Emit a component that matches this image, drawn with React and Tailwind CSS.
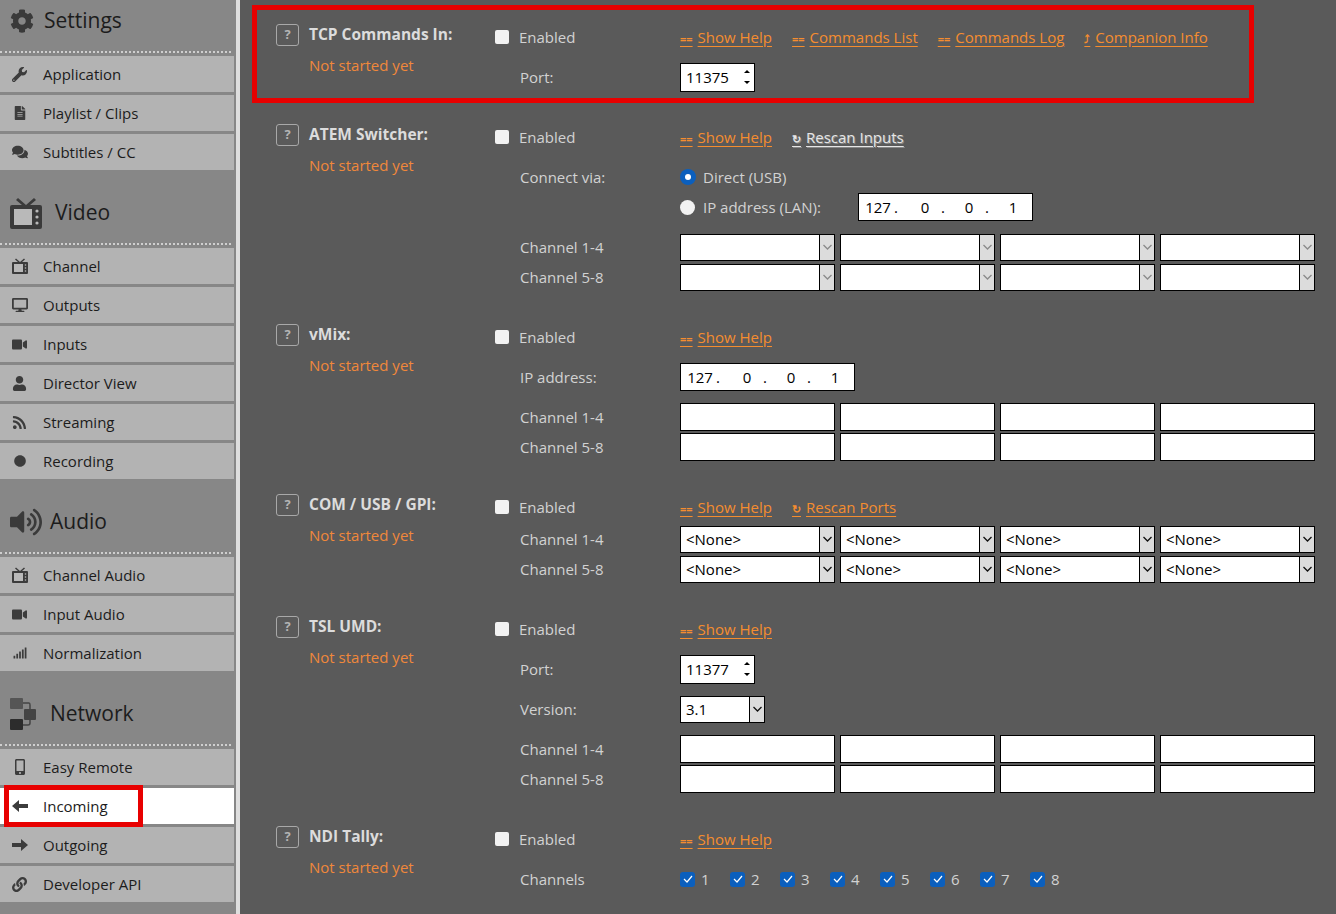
import {
  FaCog, FaWrench, FaFileAlt, FaComments, FaDesktop, FaVideo, FaUser, FaRss, FaCircle,
  FaVolumeUp, FaSignal, FaMobileAlt, FaArrowLeft, FaArrowRight, FaLink,
} from "react-icons/fa";

const TvIcon = ({ size = 16 }) => (
  <svg width={size} height={size} viewBox="0 0 32 32" fill="currentColor">
    <path d="M8 1 L16 8 L24 1 L26 3 L20 8 L30 8 Q32 8 32 10 L32 30 Q32 32 30 32 L2 32 Q0 32 0 30 L0 10 Q0 8 2 8 L12 8 L6 3 Z" />
    <rect x="4" y="12" width="18" height="16" fill="#b9b9b9" />
    <circle cx="27" cy="14" r="1.6" fill="#b9b9b9" />
    <circle cx="27" cy="20" r="1.6" fill="#b9b9b9" />
    <circle cx="27" cy="26" r="1.6" fill="#b9b9b9" />
  </svg>
);

const NetworkIcon = () => (
  <svg width="26" height="32" viewBox="0 0 26 32" fill="none">
    <rect x="0" y="0" width="13" height="11" rx="1" fill="#555" />
    <rect x="14" y="11" width="12" height="11" rx="1" fill="#444" />
    <rect x="0" y="21" width="13" height="11" rx="1" fill="#2c2c2c" />
    <path d="M13 5 H19 Q20 5 20 7 V11 M20 22 V25 Q20 27 18 27 H13" stroke="#444" strokeWidth="1.5" />
  </svg>
);

const ArrowLeft = () => (
  <svg width="16" height="12" viewBox="0 0 16 12" fill="#3c3c3c">
    <path d="M0 6 L7 0 V4 H16 V8 H7 V12 Z" />
  </svg>
);

const ArrowRight = () => (
  <svg width="16" height="12" viewBox="0 0 16 12" fill="#3c3c3c">
    <path d="M16 6 L9 0 V4 H0 V8 H9 V12 Z" />
  </svg>
);

const menu = [
  {
    title: "Settings",
    icon: <FaCog size={24} />,
    titleGap: "w-[44px]",
    items: [
      { label: "Application", icon: <FaWrench size={15} /> },
      { label: "Playlist / Clips", icon: <FaFileAlt size={14} /> },
      { label: "Subtitles / CC", icon: <FaComments size={16} /> },
    ],
  },
  {
    title: "Video",
    icon: <TvIcon size={32} />,
    titleGap: "w-[55px]",
    items: [
      { label: "Channel", icon: <TvIcon /> },
      { label: "Outputs", icon: <FaDesktop size={16} /> },
      { label: "Inputs", icon: <FaVideo size={15} /> },
      { label: "Director View", icon: <FaUser size={15} /> },
      { label: "Streaming", icon: <FaRss size={15} /> },
      { label: "Recording", icon: <FaCircle size={12} /> },
    ],
  },
  {
    title: "Audio",
    icon: <FaVolumeUp size={32} />,
    titleGap: "w-[50px]",
    items: [
      { label: "Channel Audio", icon: <TvIcon /> },
      { label: "Input Audio", icon: <FaVideo size={15} /> },
      { label: "Normalization", icon: <FaSignal size={14} /> },
    ],
  },
  {
    title: "Network",
    icon: <NetworkIcon />,
    titleGap: "w-[50px]",
    items: [
      { label: "Easy Remote", icon: <FaMobileAlt size={16} /> },
      { label: "Incoming", icon: <ArrowLeft />, active: true },
      { label: "Outgoing", icon: <ArrowRight /> },
      { label: "Developer API", icon: <FaLink size={15} /> },
    ],
  },
];

const Sidebar = () => (
  <aside className="w-[240px] shrink-0 h-full overflow-hidden bg-[#878787] border-r-4 border-[#dedede]">
    {menu.map((group, i) => (
      <div key={group.title}>
        <div className={`${i === 0 ? "h-[56px]" : "h-[78px]"} flex flex-col justify-end overflow-hidden`}>
          <div className="h-[60px] shrink-0 relative flex items-center text-[#3a3a3a]">
            <div className={`${group.titleGap} shrink-0 flex items-center pl-[10px]`}>{group.icon}</div>
            <span className="text-[21px] text-[#1c1c1c]">{group.title}</span>
          </div>
          <div className="w-[231px] border-t-2 border-dotted border-[#cfcfcf] mb-[3px]" />
        </div>
        <div className="flex flex-col gap-[3px] w-[234px]">
          {group.items.map((item) => (
            <div
              key={item.label}
              className={`h-[36px] flex items-center text-[15px] text-[#1c1c1c] ${item.active ? "bg-white" : "bg-[#b3b3b3]"}`}
            >
              <span className="w-[43px] shrink-0 flex justify-center pr-[4px] text-[#3c3c3c]">{item.icon}</span>
              {item.label}
            </div>
          ))}
        </div>
      </div>
    ))}
  </aside>
);

const Checkbox = ({ checked }) =>
  checked ? (
    <span className="w-[15px] h-[15px] rounded-[3px] bg-[#0b5fbd] flex items-center justify-center shrink-0">
      <svg width="10" height="8" viewBox="0 0 10 8" fill="none">
        <path d="M1 4 L4 7 L9 1" stroke="#fff" strokeWidth="1.2" />
      </svg>
    </span>
  ) : (
    <span className="w-[14px] h-[14px] rounded-[2px] bg-[#f2f2f2] shrink-0" />
  );

const Radio = ({ checked }) =>
  checked ? (
    <span className="w-[16px] h-[16px] rounded-full bg-[#0b5fbd] flex items-center justify-center shrink-0">
      <span className="w-[6px] h-[6px] rounded-full bg-white" />
    </span>
  ) : (
    <span className="w-[15px] h-[15px] rounded-full bg-[#f2f2f2] shrink-0" />
  );

const HelpLink = ({ mark = "==", children, className = "text-[#f58d2f] decoration-[#f58d2f]" }) => (
  <a href="#" className={`underline underline-offset-[3px] text-[15px] ${className}`}>
    <span className="text-[11px] font-bold mr-[5px]">{mark}</span>
    {children}
  </a>
);

const NumberBox = ({ value }) => (
  <div className="w-[75px] h-[29px] bg-white border border-black flex items-center justify-between pl-[5px] pr-[4px] text-[15px] text-black">
    {value}
    <span className="flex flex-col gap-[8px]">
      <span className="w-0 h-0 border-x-[3px] border-x-transparent border-b-[3px] border-b-black" />
      <span className="w-0 h-0 border-x-[3px] border-x-transparent border-t-[3px] border-t-black" />
    </span>
  </div>
);

const IpBox = () => (
  <div className="w-[175px] h-[28px] bg-white border border-black flex items-center pl-[3px] text-[15px] text-black">
    {["127", "0", "0", "1"].map((part, i) => (
      <span key={i} className={`${i === 0 ? "w-[47px]" : "w-[44px]"} flex shrink-0`}>
        <span className="w-[32px] text-center">{part}</span>
        {i < 3 && <span>.</span>}
      </span>
    ))}
  </div>
);

const Chevron = ({ color }) => (
  <svg width="9" height="6" viewBox="0 0 9 6" fill="none">
    <path d="M0.5 1 L4.5 5 L8.5 1" stroke={color} strokeWidth="1.3" />
  </svg>
);

const SelectBox = ({ value, width = "w-[155px]", disabled }) => (
  <div className={`${width} h-[27px] bg-white border border-black flex items-stretch text-[15px] text-black`}>
    <span className="flex-1 pl-[5px] leading-[25px] overflow-hidden">{value}</span>
    <span className="w-[15px] border-l border-black bg-[#dcdcdc] flex items-center justify-center">
      <Chevron color={disabled ? "#8a8a8a" : "#111"} />
    </span>
  </div>
);

const TextBox = () => <div className="w-[155px] h-[28px] bg-white border border-black" />;

const Row = ({ label, children, className = "" }) => (
  <div className={`h-[30px] flex items-center ${className}`}>
    <span className="w-[185px] pl-[25px] shrink-0">{label}</span>
    {children}
  </div>
);

const ChannelRows = ({ kind, value, disabled }) => (
  <div className="mt-[10px]">
    {["Channel 1-4", "Channel 5-8"].map((label) => (
      <Row key={label} label={label}>
        <div className="flex gap-[5px]">
          {[0, 1, 2, 3].map((n) =>
            kind === "select" ? <SelectBox key={n} value={value} disabled={disabled} /> : <TextBox key={n} />
          )}
        </div>
      </Row>
    ))}
  </div>
);

const Section = ({ title, links, children }) => (
  <section className="flex pb-[28px]">
    <div className="w-[219px] shrink-0">
      <div className="flex items-center h-[30px]">
        <span className="w-[23px] h-[22px] border border-[#a8a8a8] rounded-[3px] text-[#b4b4b4] font-bold text-[13px] flex items-center justify-center mr-[10px]">
          ?
        </span>
        <span className="font-bold text-[#dcdcdc] text-[15.5px]">{title}</span>
      </div>
      <div className="pl-[33px] mt-[1px] h-[28px] leading-[28px] text-[#f0883a]">Not started yet</div>
    </div>
    <div className="flex-1 min-w-0">
      <div className="h-[34px] flex items-center">
        <span className="w-[185px] shrink-0 flex items-center">
          <Checkbox />
          <span className="ml-[10px]">Enabled</span>
        </span>
        <div className="flex gap-[20px]">{links}</div>
      </div>
      <div className="mt-[8px]">{children}</div>
    </div>
  </section>
);

const App = () => (
  <div
    className="relative h-screen flex overflow-hidden text-[15px] text-[#d2d2d2]"
    style={{ fontFamily: '"Open Sans", sans-serif' }}
  >
    <Sidebar />
    <main className="flex-1 h-full overflow-hidden bg-[#5a5a5a] pt-[20px] pl-[36px]">
      <Section
        title="TCP Commands In:"
        links={
          <>
            <HelpLink>Show Help</HelpLink>
            <HelpLink>Commands List</HelpLink>
            <HelpLink>Commands Log</HelpLink>
            <HelpLink mark="⤴">Companion Info</HelpLink>
          </>
        }
      >
        <Row label="Port:">
          <NumberBox value="11375" />
        </Row>
      </Section>

      <Section
        title="ATEM Switcher:"
        links={
          <>
            <HelpLink>Show Help</HelpLink>
            <HelpLink mark="↻" className="text-[#e6e6e6] decoration-[#e6e6e6] [text-shadow:1px_1px_0_#888]">
              Rescan Inputs
            </HelpLink>
          </>
        }
      >
        <Row label="Connect via:">
          <span className="flex items-center gap-[7px]">
            <Radio checked />
            Direct (USB)
          </span>
        </Row>
        <Row label="">
          <span className="w-[178px] flex items-center gap-[8px]">
            <Radio />
            IP address (LAN):
          </span>
          <IpBox />
        </Row>
        <ChannelRows kind="select" value="" disabled />
      </Section>

      <Section title="vMix:" links={<HelpLink>Show Help</HelpLink>}>
        <Row label="IP address:">
          <IpBox />
        </Row>
        <ChannelRows kind="text" />
      </Section>

      <Section
        title="COM / USB / GPI:"
        links={
          <>
            <HelpLink>Show Help</HelpLink>
            <HelpLink mark="↻">Rescan Ports</HelpLink>
          </>
        }
      >
        <div className="-mt-[10px]">
          <ChannelRows kind="select" value="<None>" />
        </div>
      </Section>

      <Section title="TSL UMD:" links={<HelpLink>Show Help</HelpLink>}>
        <Row label="Port:">
          <NumberBox value="11377" />
        </Row>
        <Row label="Version:" className="mt-[10px]">
          <SelectBox value="3.1" width="w-[85px]" />
        </Row>
        <ChannelRows kind="text" />
      </Section>

      <Section title="NDI Tally:" links={<HelpLink>Show Help</HelpLink>}>
        <Row label="Channels">
          <div className="flex gap-[50px] -ml-[5px] pl-[5px]">
            {[1, 2, 3, 4, 5, 6, 7, 8].map((n) => (
              <span key={n} className="flex items-center gap-[6px] w-0 whitespace-nowrap">
                <Checkbox checked />
                {n}
              </span>
            ))}
          </div>
        </Row>
      </Section>
    </main>

    {/* red callouts drawn over the page */}
    <div className="absolute left-[252px] top-[5px] w-[1002px] h-[98px] border-[5px] border-[#e80000] pointer-events-none" />
    <div className="absolute left-[4px] top-[785px] w-[139px] h-[42px] border-[5px] border-[#e80000] pointer-events-none" />
  </div>
);

export default App;
